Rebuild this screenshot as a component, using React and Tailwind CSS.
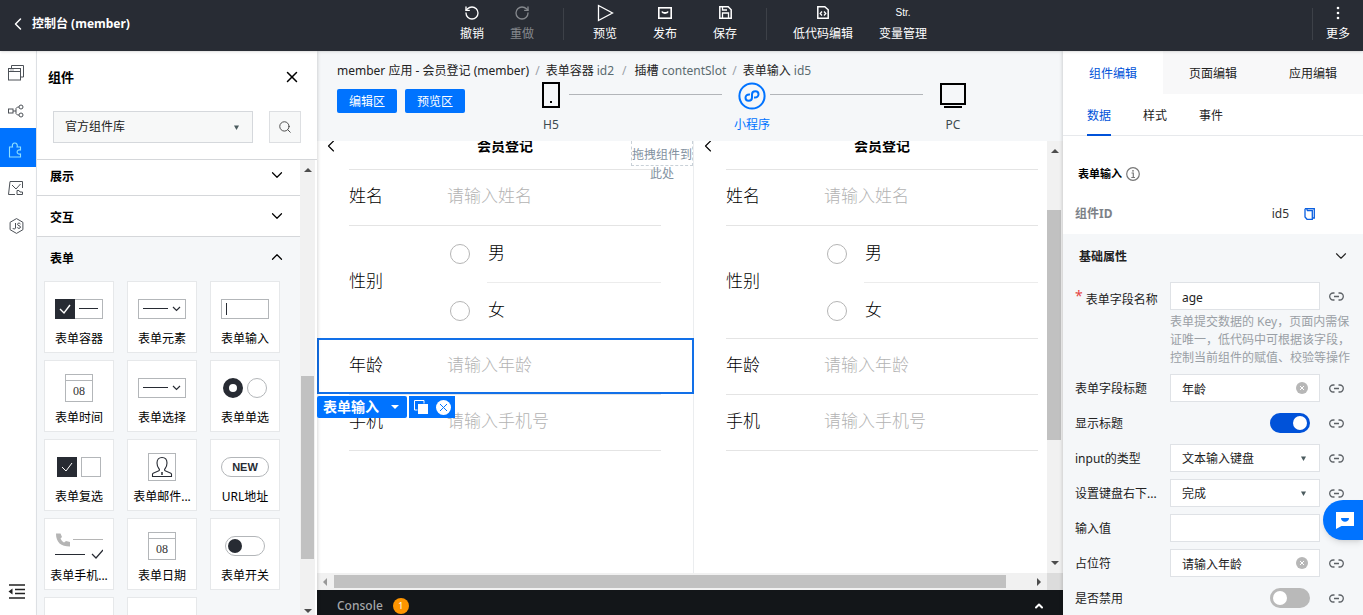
import { useState } from 'react';
import { ChevronDown, ChevronLeft, ChevronUp, RotateCcw, RotateCw, Search, X } from 'lucide-react';

/* ---------- icons ---------- */

function Triangle({ dir = 'down', className = 'text-[#4d4d4d]' }) {
  const points = {
    down: '0,0 8,0 4,4',
    up: '0,4 8,4 4,0',
    left: '4,0 4,8 0,4',
    right: '0,0 0,8 4,4',
  };
  const vertical = dir === 'left' || dir === 'right';
  return (
    <svg width={vertical ? 4 : 8} height={vertical ? 8 : 4} className={className} aria-hidden="true">
      <polygon points={points[dir]} fill="currentColor" />
    </svg>
  );
}

function SelectArrow() {
  return (
    <svg width="5" height="5" viewBox="0 0 6 6" className="pointer-events-none absolute right-3.5 text-[#4b5b5e]" aria-hidden="true">
      <path d="M0 0.5h6L3 6z" fill="currentColor" />
    </svg>
  );
}

const stroke = { fill: 'none', stroke: 'currentColor' };

function PreviewIcon() {
  return (
    <svg width="17" height="18" viewBox="0 0 17 18" {...stroke} strokeWidth="1.3">
      <path d="M1.5 1.5v15L15.5 9z" />
    </svg>
  );
}

function PublishIcon() {
  return (
    <svg width="14" height="12" viewBox="0 0 14 12" {...stroke} strokeWidth="1.6">
      <rect x="0.8" y="0.8" width="12.4" height="10.4" />
      <path d="M4 4.5c0.8 2 5.2 2 6 0" strokeWidth="1.8" />
    </svg>
  );
}

function SaveIcon() {
  return (
    <svg width="13" height="13" viewBox="0 0 13 13" {...stroke} strokeWidth="1.5">
      <path d="M0.8 0.8h8.4l3 3v8.4H0.8z" />
      <path d="M3.5 12V7h6v5M3.5 1v3h4.5" strokeWidth="1.3" />
    </svg>
  );
}

function CodeFileIcon() {
  return (
    <svg width="12" height="13" viewBox="0 0 12 13" {...stroke} strokeWidth="1.5">
      <path d="M0.8 0.8h7l3.4 3v8.4H0.8z" />
      <path d="M5 5.5L3.2 7.5 5 9.5M7 5.5l1.8 2L7 9.5" strokeWidth="1.3" />
    </svg>
  );
}

function MoreIcon() {
  return (
    <svg width="4" height="14" viewBox="0 0 4 14" fill="currentColor">
      <circle cx="2" cy="2" r="1.3" />
      <circle cx="2" cy="7" r="1.3" />
      <circle cx="2" cy="12" r="1.3" />
    </svg>
  );
}

function PagesIcon() {
  return (
    <svg width="16" height="16" viewBox="0 0 16 16" {...stroke}>
      <path d="M3.5 3V0.5h12v11.5H13" />
      <rect x="0.5" y="3.5" width="12" height="11.5" />
      <path d="M0.5 6.5h12M2.5 5h1M4.5 5h1" />
    </svg>
  );
}

function FlowIcon() {
  return (
    <svg width="16" height="14" viewBox="0 0 16 14" {...stroke}>
      <rect x="0.5" y="5" width="4.5" height="4" />
      <circle cx="13" cy="3" r="2" />
      <circle cx="13" cy="11" r="2" />
      <path d="M5 7h3M11 3H9.5L8 4.5v5L9.5 11H11" />
    </svg>
  );
}

function PuzzleIcon() {
  return (
    <svg width="16" height="16" viewBox="0 0 16 16" {...stroke} strokeWidth="1.1">
      <path d="M1.5 15V5H4.5C3.8 2.6 5 1 6.8 1s3 1.6 2.3 4h3.4v3c-1.8-0.5-3.4 0.3-3.4 2s1.6 2.5 3.4 2v3z" />
    </svg>
  );
}

function AssetIcon() {
  return (
    <svg width="16" height="15" viewBox="0 0 16 15" {...stroke}>
      <path d="M7 13.5H0.5L2 0.5h12.5V7" />
      <path d="M4 4l4 4 4.5-5" />
      <path d="M9 13.5v-4h2l1 1.5h2.5v2.5z" />
    </svg>
  );
}

function JsIcon() {
  return (
    <svg width="15" height="16" viewBox="0 0 15 16" {...stroke}>
      <path d="M7.5 0.6l6.4 3.7v7.4l-6.4 3.7-6.4-3.7V4.3z" />
      <path d="M6.5 5v5c0 1.3-2.5 1.3-2.8 0M11.5 6c-0.5-1.2-3-1.2-3 0.3 0 1.7 3 1 3 2.8 0 1.7-3 1.6-3.3 0.2" />
    </svg>
  );
}

function FoldIcon() {
  return (
    <svg width="17" height="15" viewBox="0 0 17 15" className="text-[#222]">
      <path d="M1 1h16M7 5.5h10M7 9.5h10M1 14h16" stroke="currentColor" strokeWidth="1.6" />
      <path d="M4.5 4.5v6L0.5 7.5z" fill="currentColor" />
    </svg>
  );
}

function LinkIcon() {
  return (
    <svg width="15" height="9" viewBox="0 0 15 9" {...stroke} strokeWidth="1.3">
      <path d="M5.5 8H4.2a3.5 3.5 0 0 1 0-7h1.3M9.5 1h1.3a3.5 3.5 0 0 1 0 7H9.5M5 4.5h5" />
    </svg>
  );
}

function ClearIcon() {
  return (
    <svg width="12" height="12" viewBox="0 0 12 12">
      <circle cx="6" cy="6" r="6" fill="#b7b7b7" />
      <path d="M4 4l4 4M8 4l-4 4" stroke="#fff" />
    </svg>
  );
}

function MiniProgramIcon() {
  return (
    <svg width="28" height="28" viewBox="0 0 28 28" {...stroke} strokeWidth="2">
      <circle cx="14" cy="14" r="12.6" />
      <path d="M16 15.5c3 0.4 4.5-1.2 4.5-3.2 0-1.8-1.4-3-3.1-3-1.9 0-3.4 1.3-3.4 3.2v3c0 1.9-1.5 3.3-3.4 3.3-1.7 0-3.1-1.2-3.1-3 0-2 1.5-3.6 4.5-3.2" />
    </svg>
  );
}

function PhoneDeviceIcon() {
  return (
    <svg width="18" height="26" viewBox="0 0 18 26">
      <rect x="1" y="1" width="16" height="24" fill="none" stroke="#000" strokeWidth="2" />
      <rect x="8" y="19" width="2" height="2" fill="#000" />
    </svg>
  );
}

function PcIcon() {
  return (
    <svg width="26" height="26" viewBox="0 0 26 26">
      <rect x="1" y="2" width="24" height="20" fill="none" stroke="#000" strokeWidth="2" />
      <path d="M4 25h18" stroke="#000" strokeWidth="2" />
    </svg>
  );
}

/* ---------- component thumbnails ---------- */

const INK = '#272b33';
const LINE = '#b3b6b9';

const thumbs = {
  container: (
    <svg width="48" height="28">
      <rect x="0.5" y="4.5" width="47" height="19" fill="#fff" stroke={LINE} />
      <rect y="4" width="20" height="20" fill={INK} />
      <path d="M5 14l4 4 6-8" fill="none" stroke="#fff" strokeWidth="1.4" />
      <path d="M24 13.5h19" stroke={INK} />
    </svg>
  ),
  select: (
    <svg width="48" height="28">
      <rect x="0.5" y="4.5" width="47" height="19" fill="#fff" stroke={LINE} />
      <path d="M5 13.5h25" stroke={INK} />
      <path d="M35 12l3.5 3.5L42 12" fill="none" stroke={INK} strokeWidth="1.2" />
    </svg>
  ),
  input: (
    <svg width="48" height="28">
      <rect x="0.5" y="4.5" width="47" height="19" fill="#fff" stroke={LINE} />
      <path d="M5.5 8v12" stroke={INK} />
    </svg>
  ),
  date: (
    <span className="flex h-7 w-7 flex-col border border-[#b3b6b9]">
      <span className="h-[7px] border-b border-[#b3b6b9]" />
      <span className="text-center font-['Liberation_Serif',serif] text-[12px] leading-[20px] text-[#333]">08</span>
    </span>
  ),
  radio: (
    <svg width="44" height="28">
      <circle cx="10" cy="14" r="7" fill="#fff" stroke={INK} strokeWidth="6" />
      <circle cx="34" cy="14" r="9.5" fill="#fff" stroke={LINE} />
    </svg>
  ),
  checkbox: (
    <svg width="44" height="28">
      <rect y="4" width="20" height="20" fill={INK} />
      <path d="M5 14l4 4 6-8" fill="none" stroke="#fff" />
      <rect x="24.5" y="4.5" width="19" height="19" fill="#fff" stroke={LINE} />
    </svg>
  ),
  mail: (
    <svg width="28" height="28" fill="none">
      <rect x="0.5" y="0.5" width="27" height="27" stroke={LINE} />
      <path d="M4.500 23.500v-2.500c0-1.500 7-2.500 7-4 0-1.500-2.500-2.500-2.500-7 0-3.500 2-5.500 5-5.500s5 2 5 5.500c0 4.500-2.500 5.500-2.500 7 0 1.500 7 2.500 7 4v2.500z" stroke={INK} strokeWidth="1.1" />
      <path d="M14 19v3" stroke={INK} strokeWidth="1.5" />
    </svg>
  ),
  url: (
    <span className="flex h-5 w-12 items-center justify-center rounded-full border border-[#b3b6b9] font-['Liberation_Sans',sans-serif] text-[11px] font-bold text-[#272b33]">
      NEW
    </span>
  ),
  phone: (
    <svg width="48" height="28" fill="none">
      <path d="M1 1.500c0 9 5 13 14 13v-4.500l-4-1-2 1.500C7.500 9.500 6 8 5.500 6.500L7 5 5.500 1.500z" fill="#b5b5b5" />
      <path d="M18 7.500h30" stroke="#b5b5b5" />
      <path d="M0 22.500h30" stroke={INK} />
      <path d="M37 22l4 4 7-8" stroke={INK} strokeWidth="1.2" />
    </svg>
  ),
  toggle: (
    <svg width="40" height="28">
      <rect x="0.5" y="4.5" width="39" height="19" rx="9.5" fill="#fff" stroke={LINE} />
      <circle cx="10" cy="14" r="7" fill={INK} />
    </svg>
  ),
};

const formComponents = [
  { label: '表单容器', thumb: 'container' },
  { label: '表单元素', thumb: 'select' },
  { label: '表单输入', thumb: 'input' },
  { label: '表单时间', thumb: 'date' },
  { label: '表单选择', thumb: 'select' },
  { label: '表单单选', thumb: 'radio' },
  { label: '表单复选', thumb: 'checkbox' },
  { label: '表单邮件...', thumb: 'mail' },
  { label: 'URL地址', thumb: 'url' },
  { label: '表单手机...', thumb: 'phone' },
  { label: '表单日期', thumb: 'date' },
  { label: '表单开关', thumb: 'toggle' },
  { label: '', thumb: null },
  { label: '', thumb: null },
];

/* ---------- header ---------- */

function ToolButton({ icon, label, width, disabled }) {
  return (
    <button
      type="button"
      disabled={disabled}
      className={`flex ${width} flex-col items-center ${disabled ? 'text-[#85888d]' : 'text-white'}`}
    >
      <span className="flex h-[25px] items-center">{icon}</span>
      <span className="leading-[18px]">{label}</span>
    </button>
  );
}

function Header() {
  return (
    <header className="relative z-20 flex h-[51px] shrink-0 bg-[#282c34] text-white shadow-sm">
      <a href="#console" className="flex w-[447px] items-center gap-1 pb-1 pl-2 font-bold">
        <ChevronLeft size={20} strokeWidth={1.8} />
        控制台 (member)
      </a>
      <div className="flex">
        <ToolButton width="w-[50px]" label="撤销" icon={<RotateCcw size={16} />} />
        <ToolButton width="w-[50px]" label="重做" icon={<RotateCw size={16} />} disabled />
        <span className="mt-2 mr-[11px] ml-4 h-8 w-px bg-[#3d4148]" />
        <ToolButton width="w-[60px]" label="预览" icon={<PreviewIcon />} />
        <ToolButton width="w-[60px]" label="发布" icon={<PublishIcon />} />
        <ToolButton width="w-[60px]" label="保存" icon={<SaveIcon />} />
        <span className="mt-2 mr-4 ml-[11px] h-8 w-px bg-[#3d4148]" />
        <ToolButton width="w-20" label="低代码编辑" icon={<CodeFileIcon />} />
        <ToolButton
          width="w-20"
          label="变量管理"
          icon={<span className="font-['Liberation_Sans',sans-serif] text-[10px]">Str.</span>}
        />
      </div>
      <div className="ml-auto flex">
        <span className="mt-2 h-8 w-px bg-[#3d4148]" />
        <ToolButton width="w-[50px]" label="更多" icon={<MoreIcon />} />
      </div>
    </header>
  );
}

/* ---------- left side ---------- */

function Rail() {
  const items = [
    { name: '页面', icon: <PagesIcon /> },
    { name: '流程', icon: <FlowIcon /> },
    { name: '组件', icon: <PuzzleIcon />, active: true },
    { name: '素材', icon: <AssetIcon /> },
    { name: '脚本', icon: <JsIcon /> },
  ];
  return (
    <nav className="flex w-[37px] shrink-0 flex-col border-r border-[#e3e6ea] bg-white pt-px">
      {items.map((item) => (
        <button
          key={item.name}
          type="button"
          aria-label={item.name}
          className={`flex items-center justify-center pt-1 pr-1 ${item.active ? 'h-[39px] bg-[#0073ff] text-[#8fe0ff]' : 'h-[38px] text-[#4c5157]'}`}
        >
          {item.icon}
        </button>
      ))}
      <button type="button" aria-label="收起" className="mt-auto mb-4 flex justify-center pr-1">
        <FoldIcon />
      </button>
    </nav>
  );
}

function Section({ title, open }) {
  const Icon = open ? ChevronUp : ChevronDown;
  return (
    <button type="button" className="flex h-10 w-full shrink-0 items-center justify-between pr-3.5 pl-[13px] font-bold text-black">
      <span className="pt-1">{title}</span>
      <Icon size={18} strokeWidth={1.6} />
    </button>
  );
}

function ComponentPanel() {
  return (
    <aside className="relative z-10 flex w-[280px] shrink-0 flex-col bg-white shadow-[1px_0_3px_rgba(0,0,0,0.15)]">
      <div className="flex h-[52px] items-center justify-between pr-4 pl-[11px]">
        <h2 className="text-[13px] font-bold text-black">组件</h2>
        <button type="button" aria-label="关闭">
          <X size={18} strokeWidth={2} className="text-black" />
        </button>
      </div>
      <div className="flex gap-4 px-4 pt-2 pb-4">
        <div className="relative flex flex-1 items-center">
          <select aria-label="组件库" className="h-8 w-full appearance-none border border-[#d5d8dc] bg-[#f7f8f8] px-[11px] text-[#222]">
            <option>官方组件库</option>
          </select>
          <SelectArrow />
        </div>
        <button type="button" aria-label="搜索" className="flex h-8 w-8 items-center justify-center border border-[#dddfe2] bg-[#f7f8f8]">
          <Search size={14} strokeWidth={1.6} className="text-[#444]" />
        </button>
      </div>
      <div className="flex min-h-0 flex-1 border-t border-[#d5d7da]">
        <div className="flex min-w-0 flex-1 flex-col overflow-hidden bg-[#f5f7f9]">
          <div className="-mt-[5px] shrink-0 border-b border-[#d5d7da] bg-white"><Section title="展示" /></div>
          <div className="shrink-0 border-b border-[#d5d7da] bg-white"><Section title="交互" /></div>
          <Section title="表单" open />
          <div className="mt-1 grid grid-cols-3 gap-x-[13px] gap-y-[7px] pr-5 pl-[7px]">
            {formComponents.map((item, i) => (
              <div key={i} className="flex h-[72px] flex-col items-center border border-[#e6e8ea] bg-white pt-[13px] text-black">
                {item.thumb && (
                  <>
                    <span className="flex h-7 items-center">{thumbs[item.thumb]}</span>
                    <span className="mt-2 leading-4 whitespace-nowrap">{item.label}</span>
                  </>
                )}
              </div>
            ))}
          </div>
        </div>
        <div className="mr-0.5 flex w-[15px] flex-col items-center justify-between bg-[#f1f1f1] pt-2 pb-0.5">
          <Triangle dir="up" />
          <div className="flex w-full flex-1 flex-col pt-[204px] pb-[50px]">
            <div className="mx-px flex-1 bg-[#c1c1c1]" />
          </div>
          <Triangle />
        </div>
      </div>
    </aside>
  );
}

/* ---------- canvas ---------- */

function DeviceBar() {
  return (
    <div className="flex flex-1 pr-[92px] pl-[68px] text-[#3c4a50]">
      <button type="button" className="flex w-9 flex-col items-center gap-[7px]">
        <PhoneDeviceIcon />
        <span className="leading-5">H5</span>
      </button>
      <span className="mt-3 mr-3 h-px flex-1 bg-[#b2b5b9]" />
      <button type="button" className="flex w-9 flex-col items-center gap-[5px] text-[#0073ff]">
        <MiniProgramIcon />
        <span className="leading-5 whitespace-nowrap">小程序</span>
      </button>
      <span className="mt-3 mr-3 h-px flex-1 bg-[#b2b5b9]" />
      <button type="button" className="flex w-9 flex-col items-center gap-[7px]">
        <PcIcon />
        <span className="leading-5">PC</span>
      </button>
    </div>
  );
}

function TextRow({ id, label, placeholder, selected }) {
  return (
    <div className="relative px-8">
      <div className="flex h-14 items-center border-b border-[#e4e4e4] pb-[3px]">
        <label htmlFor={id} className="w-[98px] shrink-0 text-black">{label}</label>
        <input id={id} placeholder={placeholder} className="w-full min-w-0 bg-transparent outline-none placeholder:text-[#b3b3b3]" />
      </div>
      {selected && (
        <>
          <div className="pointer-events-none absolute -top-px -right-px bottom-px left-0 border-2 border-[#1270e8]" />
          <div className="absolute top-full left-0 z-10 mt-px flex h-[22px] gap-0.5 text-white">
            <button type="button" className="flex w-[90px] items-center justify-between rounded-xs bg-[#0073ff] pr-2 pl-1.5 text-[14px] font-bold">
              表单输入
              <Triangle className="text-white" />
            </button>
            <span className="flex items-center gap-2 bg-[#0073ff] pr-1 pl-[5px]">
              <button type="button" aria-label="复制">
                <svg width="14" height="14" viewBox="0 0 14 14">
                  <path d="M3.5 10h-3V0.5H10v3" fill="none" stroke="#fff" />
                  <rect x="4" y="4" width="10" height="10" fill="#fff" />
                </svg>
              </button>
              <button type="button" aria-label="删除">
                <svg width="15" height="15" viewBox="0 0 15 15">
                  <circle cx="7.5" cy="7.5" r="7.5" fill="#fff" />
                  <path d="M4 4l7 7M11 4l-7 7" stroke="#0073ff" />
                </svg>
              </button>
            </span>
          </div>
        </>
      )}
    </div>
  );
}

function RadioOption({ name, value }) {
  return (
    <label className="flex h-14 items-center">
      <input type="radio" name={name} className="mr-[18px] ml-[3px] h-5 w-5 shrink-0 appearance-none rounded-full border border-[#b5b5b5] bg-white checked:border-[6px] checked:border-[#0073ff]" />
      <span className="pb-0.5">{value}</span>
    </label>
  );
}

function FormPreview({ prefix, editing }) {
  return (
    <section className="relative -mt-[17px] w-[377px] shrink-0 border-r border-[#ebedef] bg-white text-[17px] font-light text-black">
      <div className="px-8">
        <div className="flex h-[46px] items-center border-b border-[#e4e4e4] pb-0.5">
          <button type="button" aria-label="返回" className="mr-1 -ml-7">
            <ChevronLeft size={20} strokeWidth={1.3} />
          </button>
          <h3 className="flex-1 pl-1 text-center text-[14px] font-bold">会员登记</h3>
        </div>
      </div>
      <TextRow id={`${prefix}-name`} label="姓名" placeholder="请输入姓名" />
      <fieldset className="mx-8 flex h-[113px] items-center border-b border-[#e4e4e4]">
        <span className="w-[98px] shrink-0 pb-0.5">性别</span>
        <div className="flex-1">
          <RadioOption name={`${prefix}-gender`} value="男" />
          <div className="ml-10 h-px bg-[#ececec]" />
          <RadioOption name={`${prefix}-gender`} value="女" />
        </div>
      </fieldset>
      <TextRow id={`${prefix}-age`} label="年龄" placeholder="请输入年龄" selected={editing} />
      <TextRow id={`${prefix}-phone`} label="手机" placeholder="请输入手机号" />
      {editing && (
        <div className="absolute top-[17px] right-0 w-[62px] text-center text-[12px] font-normal text-[#8291a0]">
          <div className="flex h-[25px] flex-col justify-end border border-t-0 border-dashed border-[#c9d1d8] leading-5 whitespace-nowrap">
            拖拽组件到
          </div>
          <div className="leading-4">此处</div>
        </div>
      )}
    </section>
  );
}

function Workspace() {
  return (
    <main className="flex min-w-0 flex-1 flex-col bg-[#f5f7f9]">
      <nav className="flex pt-2.5 pl-5 leading-5 text-[#222]">
        <a href="#page">member 应用 - 会员登记 (member)</a>
        <span className="mx-1.5 text-[#9ba1a8]">/</span>
        <a href="#id2">表单容器 <span className="text-[#5b6b70]">id2</span></a>
        <span className="mx-2 text-[#9ba1a8]">/</span>
        <a href="#slot">插槽 <span className="text-[#5b6b70]">contentSlot</span></a>
        <span className="mx-1.5 text-[#9ba1a8]">/</span>
        <a href="#id5">表单输入 <span className="text-[#5b6b70]">id5</span></a>
      </nav>
      <div className="flex h-[60px] shrink-0 pt-px pl-5">
        <div className="mt-[7px] flex gap-2">
          <button type="button" className="h-6 w-[60px] rounded-xs bg-[#0073ff] pt-0.5 text-white">编辑区</button>
          <button type="button" className="h-6 w-[60px] rounded-xs bg-[#0073ff] pt-0.5 text-white">预览区</button>
        </div>
        <DeviceBar />
      </div>
      <div className="flex min-h-0 flex-1">
        <div className="flex min-w-0 flex-1 overflow-hidden bg-white">
          <FormPreview prefix="edit" editing />
          <FormPreview prefix="view" />
        </div>
        <div className="flex w-4 flex-col items-center bg-[#f1f1f1] py-2">
          <Triangle dir="up" />
          <div className="flex w-full flex-1 flex-col pt-[57px] pb-[121px]">
            <div className="mr-0.5 flex-1 bg-[#c1c1c1]" />
          </div>
          <Triangle />
        </div>
      </div>
      <div className="flex h-[17px] shrink-0 items-center bg-[#f1f1f1]">
        <div className="flex flex-1 items-center gap-[7px] pl-1.5">
          <Triangle dir="left" className="text-[#999]" />
          <div className="mr-6 h-[13px] flex-1 bg-[#c1c1c1]" />
          <Triangle dir="right" />
        </div>
        <div className="ml-1.5 h-full w-4 bg-[#dcdcdc]" />
      </div>
      <footer className="flex h-[25px] shrink-0 items-center bg-[#131619] pt-1.5 pr-[18px] pl-5 text-[#a5a7aa]">
        <span className="font-medium">Console</span>
        <span className="ml-2.5 flex h-4 w-4 items-center justify-center rounded-full bg-[#ff9500] text-[9px] text-white">1</span>
        <button type="button" aria-label="展开" className="ml-auto text-white">
          <ChevronUp size={12} strokeWidth={4} />
        </button>
      </footer>
    </main>
  );
}

/* ---------- property panel ---------- */

function Field({ id, label, required, help, children }) {
  return (
    <div className="flex">
      <label
        htmlFor={id}
        className={`flex h-7 w-[95px] shrink-0 items-center whitespace-nowrap text-[#222] ${required ? 'pt-2' : 'pt-0.5'}`}
      >
        {required && <span className="mr-[3px] -mt-2 text-[14px] text-[#e54545]">*</span>}
        {label}
      </label>
      <div className="flex-1">
        <div className="flex items-center">
          <div className="relative flex h-7 w-[150px] items-center">{children}</div>
          <button type="button" aria-label={`绑定${label}`} className="ml-[9px] text-[#5c6166]">
            <LinkIcon />
          </button>
        </div>
        {help && <p className="mt-[3px] mr-3 leading-[18px] text-[#9a9fa5]">{help}</p>}
      </div>
    </div>
  );
}

function TextInput({ id, initial, clearable }) {
  const [value, setValue] = useState(initial);
  return (
    <>
      <input
        id={id}
        value={value}
        onChange={(e) => setValue(e.target.value)}
        className="h-7 w-full border border-[#dfe2e6] bg-white px-[11px] pt-0.5 text-[#222] outline-none"
      />
      {clearable && (
        <button type="button" aria-label="清除" onClick={() => setValue('')} className="absolute right-3">
          <ClearIcon />
        </button>
      )}
    </>
  );
}

function SelectInput({ id, option }) {
  return (
    <>
      <select id={id} className="h-7 w-full appearance-none border border-[#dfe2e6] bg-white px-[11px] pt-0.5 text-[#222]">
        <option>{option}</option>
      </select>
      <SelectArrow />
    </>
  );
}

function Toggle({ id, initial }) {
  const [on, setOn] = useState(initial);
  return (
    <input
      id={id}
      type="checkbox"
      role="switch"
      checked={on}
      onChange={() => setOn(!on)}
      className="mr-2.5 ml-auto h-5 w-10 appearance-none rounded-full bg-[#b9b9b9] p-[3px] before:block before:h-3.5 before:w-3.5 before:rounded-full before:bg-white checked:bg-[#0052d9] checked:before:ml-5"
    />
  );
}

function PropertyPanel() {
  return (
    <aside className="z-10 flex w-[300px] shrink-0 flex-col bg-white shadow-[-1px_0_3px_rgba(0,0,0,0.15)]">
      <div className="grid h-[43px] shrink-0 grid-cols-3">
        <button type="button" className="pt-0.5 text-[#0052d9]">组件编辑</button>
        <button type="button" className="bg-[#f8f8f9] pt-0.5 text-[#222]">页面编辑</button>
        <button type="button" className="bg-[#f8f8f9] pt-0.5 text-[#222]">应用编辑</button>
      </div>
      <div className="flex h-[42px] shrink-0 gap-8 border-b border-[#e7e9ec] pl-6 text-[#222]">
        <button type="button" className="-mb-px border-b-2 border-[#0052d9] pt-[3px] text-[#0052d9]">数据</button>
        <button type="button" className="pt-0.5">样式</button>
        <button type="button" className="pt-0.5">事件</button>
      </div>
      <div className="shrink-0 pt-7 pb-2.5">
        <div className="flex items-center gap-1 pl-[15px] text-[11px] leading-5 font-bold text-black">
          表单输入
          <svg width="14" height="14" viewBox="0 0 14 14" className="text-[#777]">
            <circle cx="7" cy="7" r="6.3" {...stroke} strokeWidth="1.2" />
            <path d="M5.5 6h1.8v4.5M5.3 10.5h3.7" {...stroke} strokeWidth="1.2" />
            <circle cx="7" cy="3.8" r="0.9" fill="currentColor" />
          </svg>
        </div>
        <div className="mt-5 flex items-center pr-12 pl-3 leading-5">
          <span className="font-bold text-[#7d8288]">组件ID</span>
          <span className="mr-[15px] ml-auto text-[#333]">id5</span>
          <button type="button" aria-label="复制ID" className="text-[#0a5fe0]">
            <svg width="11" height="12" viewBox="0 0 11 12" {...stroke} strokeWidth="1.3">
              <path d="M3 2.5V0.7h7.3v9.300H8.500" />
              <path d="M1 0.700h9M1 0.700v8.300l2 2.300h5.300V2.700H3" />
            </svg>
          </button>
        </div>
      </div>
      <div className="flex-1 bg-[#f5f7f9] pl-3">
        <button type="button" className="flex h-12 w-full items-center justify-between pr-[13px] pb-1 pl-1 font-bold text-[#222]">
          <span className="pt-0.5">基础属性</span>
          <ChevronDown size={18} strokeWidth={1.5} />
        </button>
        <div className="flex flex-col gap-[7px]">
          <Field id="field-name" label="表单字段名称" required help="表单提交数据的 Key，页面内需保证唯一，低代码中可根据该字段，控制当前组件的赋值、校验等操作">
            <TextInput id="field-name" initial="age" />
          </Field>
          <Field id="field-title" label="表单字段标题">
            <TextInput id="field-title" initial="年龄" clearable />
          </Field>
          <Field id="show-title" label="显示标题">
            <Toggle id="show-title" initial={true} />
          </Field>
          <Field id="input-type" label="input的类型">
            <SelectInput id="input-type" option="文本输入键盘" />
          </Field>
          <Field id="confirm-type" label="设置键盘右下...">
            <SelectInput id="confirm-type" option="完成" />
          </Field>
          <Field id="input-value" label="输入值">
            <TextInput id="input-value" initial="" />
          </Field>
          <Field id="placeholder" label="占位符">
            <TextInput id="placeholder" initial="请输入年龄" clearable />
          </Field>
          <Field id="disabled" label="是否禁用">
            <Toggle id="disabled" initial={false} />
          </Field>
        </div>
      </div>
    </aside>
  );
}

export default function App() {
  return (
    <div className="flex h-screen flex-col overflow-hidden bg-white font-['Noto_Sans','Noto_Sans_CJK_SC',sans-serif] text-[12px] leading-[18px]">
      <Header />
      <div className="flex min-h-0 flex-1">
        <Rail />
        <ComponentPanel />
        <Workspace />
        <PropertyPanel />
      </div>
      {/* help chat */}
      <button
        type="button"
        aria-label="在线客服"
        className="fixed right-0 bottom-[75px] z-30 flex h-10 w-10 items-center justify-center rounded-l-full bg-[#0073ff] pl-1 shadow-md"
      >
        <svg width="18" height="17" viewBox="0 0 18 17">
          <path d="M0 0h18v14H5.5L0 17z" fill="#fff" />
          <path d="M5 6h8c0 5-8 5-8 0z" fill="#0073ff" />
        </svg>
      </button>
    </div>
  );
}
